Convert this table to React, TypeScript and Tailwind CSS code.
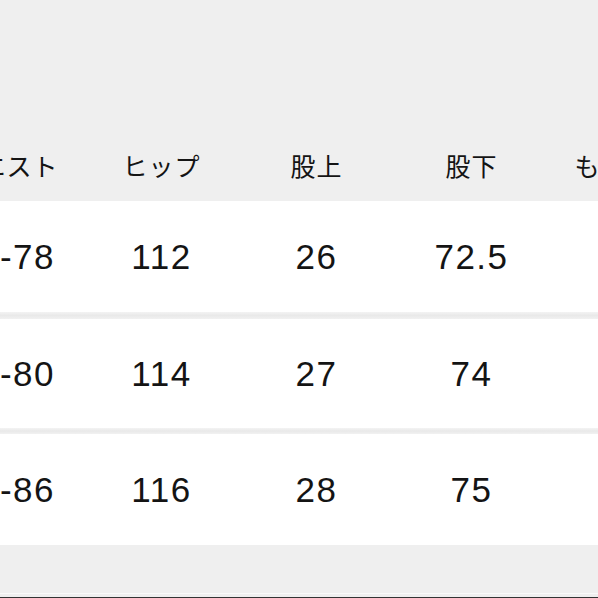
import React from 'react';

const headers = ['ウエスト', 'ヒップ', '股上', '股下', 'もも周り'];

const rows = [
  { values: ['72-78', '112', '26', '72.5', '31'], height: 'h-[111px]' },
  { values: ['74-80', '114', '27', '74', '32'], height: 'h-[109px]' },
  { values: ['80-86', '116', '28', '75', '33'], height: 'h-[111px]' },
];

const font = { fontFamily: '"Liberation Sans", "Noto Sans CJK JP", sans-serif' };

export default function App() {
  return (
    <div className="w-[598px] h-[598px] overflow-hidden bg-[#efefef] flex flex-col text-[#141414]" style={font}>
      {/* top area */}
      <div className="h-[130px] shrink-0" />

      {/* header row */}
      <div className="h-[71px] shrink-0 grid grid-cols-[repeat(5,155px)] ml-[-71px] w-[775px] items-center">
        {headers.map((h) => (
          <div key={h} className="text-center text-[25px] leading-none tracking-[1px]" style={{ fontFamily: '"Noto Sans CJK JP", sans-serif' }}>
            {h}
          </div>
        ))}
      </div>

      {/* body rows */}
      {rows.map((row, i) => (
        <React.Fragment key={i}>
          {i > 0 && (
            <div className={`${i === 1 ? 'h-[7px]' : 'h-[6px]'} shrink-0 bg-gradient-to-b from-[#f3f3f3] via-[#e9e9e9] to-[#f1f1f1]`} />
          )}
          <div className={`${row.height} shrink-0 bg-white`}>
            <div className="h-full grid grid-cols-[repeat(5,155px)] ml-[-71px] w-[775px] items-center">
              {row.values.map((v, j) => (
                <div key={j} className="text-center text-[35px] leading-none tracking-[1.5px]">
                  {v}
                </div>
              ))}
            </div>
          </div>
        </React.Fragment>
      ))}

      {/* bottom area */}
      <div className="h-[48px] shrink-0" />
      <div className="h-[1px] shrink-0 bg-[#f9f9f9]" />
      <div className="h-[3px] shrink-0" />
      <div className="h-[1px] shrink-0 bg-[#333333]" />
    </div>
  );
}
